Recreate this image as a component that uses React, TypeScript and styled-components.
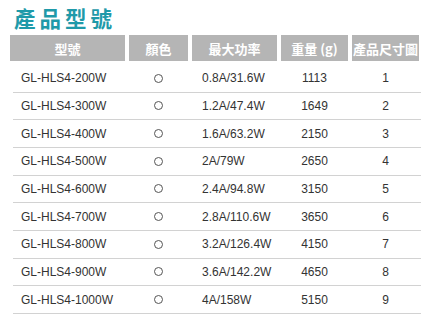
import styled, { createGlobalStyle } from "styled-components";

const GlobalStyle = createGlobalStyle`
  body {
    margin: 0;
    background: #ffffff;
    font-family: "Liberation Sans", Arial, "Noto Sans CJK TC", sans-serif;
  }
`;

const Page = styled.div`
  width: 438px;
  height: 329px;
  padding-left: 10px;
  box-sizing: border-box;
  overflow: hidden;
`;

const Title = styled.h1`
  margin: 0;
  padding: 6px 0 5px 4px;
  font-family: "Noto Sans CJK TC", sans-serif;
  font-size: 21.5px;
  line-height: 24px;
  font-weight: 700;
  letter-spacing: 4px;
  color: #1f9aa9;
`;

const HeadRow = styled.div`
  display: grid;
  grid-template-columns: 115px 59px 85px 67px 67px;
  column-gap: 4px;
  margin-bottom: 4px;
`;

const HeadCell = styled.div`
  height: 26px;
  display: flex;
  align-items: center;
  justify-content: center;
  background: #b5b5b5;
  color: #ffffff;
  font-family: "Noto Sans CJK TC", sans-serif;
  font-weight: 700;
  font-size: 13px;
  white-space: nowrap;
`;

const Row = styled.div`
  display: grid;
  grid-template-columns: 112px 59px 85px 67px 67px;
  column-gap: 4px;
  margin-left: 3px;
  width: 408px;
  height: 27.66px;
  box-sizing: border-box;
  border-bottom: 1.5px solid #d2d2d2;
  color: #333333;
  font-size: 12px;
`;

const Cell = styled.div<{ $align?: "left" | "center"; $pad?: number }>`
  display: flex;
  align-items: center;
  justify-content: ${(p) => (p.$align === "left" ? "flex-start" : "center")};
  padding-left: ${(p) => p.$pad ?? 0}px;
  white-space: nowrap;
`;

const Circle = styled.span`
  display: inline-block;
  width: 7px;
  height: 7px;
  border: 1px solid #555;
  border-radius: 50%;
`;

const heads = ["型號", "顏色", "最大功率", "重量 (g)", "產品尺寸圖"];

const rows = [
  ["GL-HLS4-200W", "0.8A/31.6W", "1113", "1"],
  ["GL-HLS4-300W", "1.2A/47.4W", "1649", "2"],
  ["GL-HLS4-400W", "1.6A/63.2W", "2150", "3"],
  ["GL-HLS4-500W", "2A/79W", "2650", "4"],
  ["GL-HLS4-600W", "2.4A/94.8W", "3150", "5"],
  ["GL-HLS4-700W", "2.8A/110.6W", "3650", "6"],
  ["GL-HLS4-800W", "3.2A/126.4W", "4150", "7"],
  ["GL-HLS4-900W", "3.6A/142.2W", "4650", "8"],
  ["GL-HLS4-1000W", "4A/158W", "5150", "9"],
];

export default function App() {
  return (
    <Page>
      <GlobalStyle />
      <Title>產品型號</Title>
      <HeadRow>
        {heads.map((h) => (
          <HeadCell key={h}>{h}</HeadCell>
        ))}
      </HeadRow>
      {rows.map(([model, power, weight, size]) => (
        <Row key={model}>
          <Cell $align="left" $pad={8}>
            {model}
          </Cell>
          <Cell>
            <Circle />
          </Cell>
          <Cell $align="left" $pad={10}>
            {power}
          </Cell>
          <Cell>{weight}</Cell>
          <Cell>{size}</Cell>
        </Row>
      ))}
    </Page>
  );
}
